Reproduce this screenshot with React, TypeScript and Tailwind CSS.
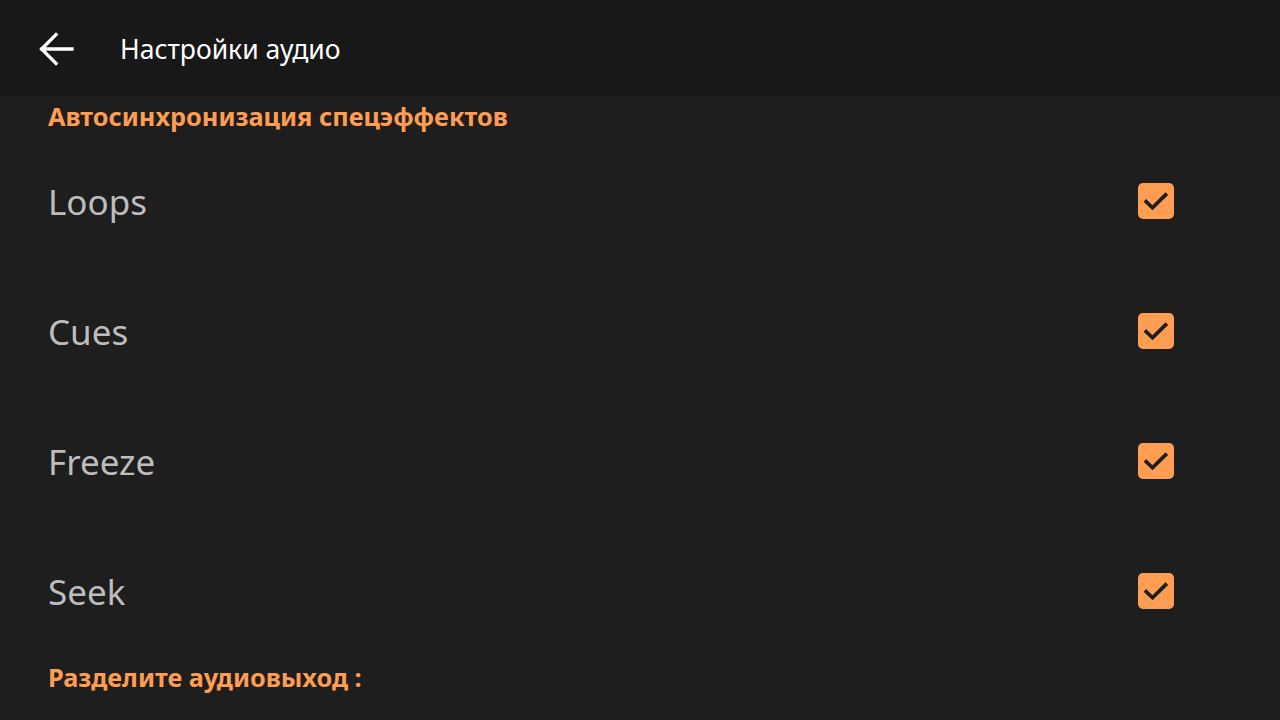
import React from "react";

const items = ["Loops", "Cues", "Freeze", "Seek"];

function Check() {
  return (
    <div className="w-[36px] h-[36px] rounded-[5px] bg-[#ff9d52] flex items-center justify-center">
      <svg width="30" height="30" viewBox="0 0 24 24">
        <path d="M4.2 12.6 L9.2 17.4 L19.6 7.2" fill="none" stroke="#1e1e1e" strokeWidth="3" strokeLinecap="square" />
      </svg>
    </div>
  );
}

export default function App() {
  return (
    <div className="w-[1280px] h-[720px] overflow-hidden bg-[#1e1e1e]" style={{ fontFamily: '"Noto Sans", sans-serif' }}>
      <div className="h-[96px] bg-[#181818] flex items-center">
        <div className="w-[120px] flex items-center pl-[32px] pt-[2px]">
          <svg width="48" height="48" viewBox="0 0 24 24">
            <path d="M20 12 H5 M12 4.8 L4.8 12 L12 19.2" fill="none" stroke="#ffffff" strokeWidth="1.7" strokeLinecap="square" />
          </svg>
        </div>
        <div className="text-white text-[26.5px] leading-none pt-[2px]">Настройки аудио</div>
      </div>
      <div className="h-[40px] flex items-center pl-[48px] pt-[2px] text-[#ff9d52] text-[25.3px] font-bold leading-none">
        Автосинхронизация спецэффектов
      </div>
      {items.map((t) => (
        <div key={t} className="h-[130px] flex items-center justify-between pl-[48px] pr-[106px]">
          <div className="text-[#bdbdbd] text-[35px] leading-none">{t}</div>
          <Check />
        </div>
      ))}
      <div className="h-[44px] flex items-center pl-[48px] text-[#ff9d52] text-[25.3px] font-bold leading-none">
        Разделите аудиовыход :
      </div>
    </div>
  );
}
